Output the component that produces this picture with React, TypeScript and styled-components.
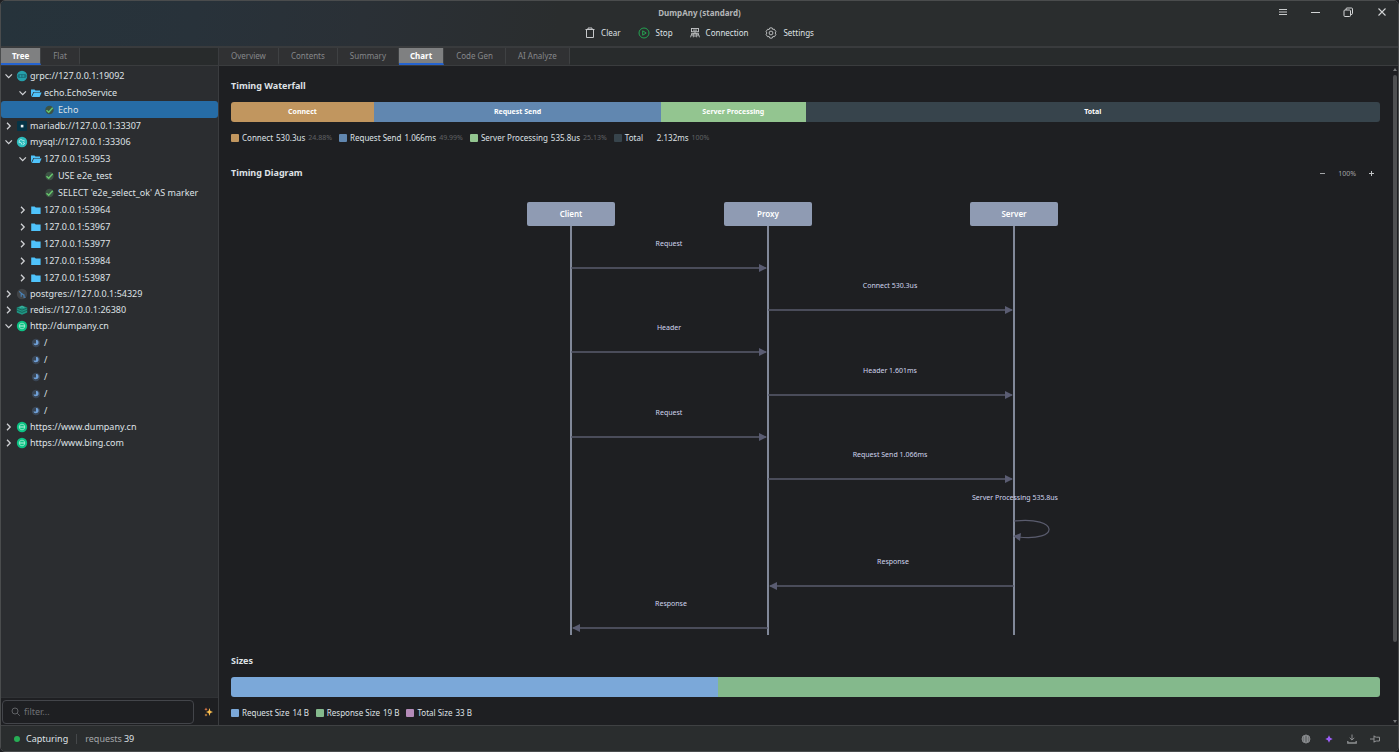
import React from "react";
import styled, { createGlobalStyle } from "styled-components";

const Global = createGlobalStyle`
  *, *::before, *::after { box-sizing: border-box; }
  html, body { margin: 0; background: #1e1f22; }
  body, button, input { font-family: "Noto Sans", "Open Sans", sans-serif; font-size: 9px; color: #dfe1e5; }
  button { border: 0; padding: 0; background: none; cursor: pointer; }
  h2 { margin: 0; }
`;

const Window = styled.div`
  display: flex;
  flex-direction: column;
  height: 100vh;
  border: 1px solid #4a4c4d;
  border-radius: 5px;
  overflow: hidden;
  background: #1e1f22;
`;

const Header = styled.header`
  display: grid;
  grid-template-columns: 1fr auto 1fr;
  grid-template-rows: 22px 20px;
  height: 47px;
  flex: none;
  border-bottom: 2px solid #393b3d;
  background: linear-gradient(100deg, #26333b 0%, #28323a 14%, #2a3036 26%, #2a2d2e 40%);
`;

const Title = styled.div`
  grid-column: 2;
  align-self: center;
  text-align: center;
  font-size: 8px;
  font-weight: 700;
  color: #b4b6b8;
`;

const WindowButtons = styled.div`
  grid-column: 3;
  justify-self: end;
  display: flex;
  align-items: center;
`;

const WindowButton = styled.button`
  display: grid;
  place-items: center;
  width: 33px;
  height: 22px;
`;

const Toolbar = styled.nav`
  grid-row: 2;
  grid-column: 2;
  display: flex;
  align-items: center;
  justify-content: center;
  gap: 17px;
`;

const ToolButton = styled.button`
  display: flex;
  align-items: center;
  gap: 6px;
  font-size: 8px;
  line-height: 16px;
`;

const Body = styled.div`
  display: flex;
  flex: 1;
  min-height: 0;
`;

const Sidebar = styled.aside`
  display: flex;
  flex-direction: column;
  width: 218px;
  flex: none;
  border-right: 1px solid #3a3c3f;
  background: #2b2d30;
`;

const TabBar = styled.div`
  display: flex;
  height: 18px;
  flex: none;
  border-bottom: 1px solid #3a3c3e;
  background: #282b2c;
`;

const Tab = styled.button<{ $active?: boolean }>`
  padding: 0 ${(p) => (p.$active ? 11 : 12)}px;
  font-size: 8px;
  line-height: 15px;
  font-weight: ${(p) => (p.$active ? 700 : 400)};
  color: ${(p) => (p.$active ? "#ffffff" : "#85878a")};
  background: ${(p) => (p.$active ? "#7f8081" : "#303133")};
  border-right: 1px solid #3f4143;
  border-bottom: 2px solid ${(p) => (p.$active ? "#2563cf" : "#303133")};
`;

const Tree = styled.ul`
  flex: 1;
  min-height: 0;
  margin: 0;
  padding: 2px 0 0;
  list-style: none;
  overflow: hidden;
`;

const TreeRow = styled.li<{ $level: number; $selected?: boolean }>`
  display: flex;
  align-items: center;
  gap: 2px;
  height: ${(p) => (p.$level ? 17 : 16)}px;
  padding-left: ${(p) => 3 + p.$level * 14}px;
  border-radius: 3px;
  line-height: 16px;
  white-space: nowrap;
  background: ${(p) => (p.$selected ? "#266ca6" : "transparent")};
`;

const Slot = styled.span<{ $w: number }>`
  display: grid;
  place-items: center;
  flex: none;
  width: ${(p) => p.$w}px;
`;

const FilterBar = styled.div`
  display: flex;
  align-items: center;
  height: 28px;
  flex: none;
  padding-left: 1px;
  border-top: 1px solid #303235;
  background: #1e1f22;
`;

const SearchField = styled.label`
  display: flex;
  align-items: center;
  gap: 4px;
  flex: 1;
  height: 24px;
  padding: 0 8px;
  border: 1px solid #43454a;
  border-radius: 4px;
`;

const SearchInput = styled.input`
  flex: 1;
  min-width: 0;
  padding: 0;
  border: 0;
  outline: 0;
  background: none;
  &::placeholder { color: #6f7175; opacity: 1; }
`;

const SparkButton = styled.button`
  display: grid;
  place-items: center;
  width: 20px;
  margin-left: 4px;
`;

const Main = styled.main`
  display: flex;
  flex-direction: column;
  flex: 1;
  min-width: 0;
`;

const ScrollArea = styled.div`
  display: flex;
  flex: 1;
  min-height: 0;
`;

const Content = styled.div`
  flex: 1;
  min-width: 0;
  padding: 13px 12px 0;
  overflow: hidden;
`;

const ScrollTrack = styled.div`
  display: flex;
  flex-direction: column;
  align-items: center;
  gap: 4px;
  width: 6px;
  padding: 2px 0;
`;

const ScrollThumb = styled.div`
  width: 4px;
  height: 567px;
  margin-bottom: auto;
  border-radius: 2px;
  background: #505153;
`;

const SectionHead = styled.div`
  display: flex;
  align-items: center;
  justify-content: space-between;
  height: 14px;
`;

const SectionTitle = styled.h2`
  font-size: 9px;
  line-height: 14px;
  font-weight: 700;
`;

const Bar = styled.div`
  display: flex;
  height: 20px;
  margin-top: 9px;
  border-radius: 3px;
  overflow: hidden;
`;

const Segment = styled.div<{ $grow: number; $color: string }>`
  flex: ${(p) => p.$grow} 1 0;
  background: ${(p) => p.$color};
  color: #ffffff;
  font-size: 7px;
  line-height: 20px;
  font-weight: 700;
  text-align: center;
`;

const Legend = styled.div`
  display: flex;
  gap: 7px;
  margin-top: 8px;
  font-size: 8px;
  line-height: 16px;
`;

const LegendItem = styled.span`
  display: flex;
  align-items: center;
  gap: 3px;
`;

const LegendName = styled.span`
  min-width: 29px;
`;

const Swatch = styled.i<{ $color: string }>`
  width: 8px;
  height: 8px;
  border-radius: 1px;
  background: ${(p) => p.$color};
`;

const Percent = styled.span`
  color: #606265;
  font-size: 7px;
`;

const Zoom = styled.div`
  display: flex;
  align-items: center;
  gap: 12px;
  padding-right: 5px;
  font-size: 7px;
  color: #a2a4a7;
`;

const ZoomButton = styled.button`
  display: grid;
  place-items: center;
  width: 7px;
  height: 14px;
`;

const DiagramSection = styled.section`
  margin-top: 20px;
`;

const Diagram = styled.svg`
  display: block;
  margin: 21px auto 0;
  font-size: 7px;
`;

const SizesSection = styled.section`
  margin-top: 18px;
`;

const StatusBar = styled.footer`
  display: flex;
  align-items: center;
  height: 26px;
  flex: none;
  padding: 0 17px 0 13px;
  border-top: 1px solid #3f4143;
  background: #2a2d2e;
`;

const Dot = styled.i`
  width: 6px;
  height: 6px;
  margin-right: 6px;
  border-radius: 50%;
  background: #27ae55;
`;

const Divider = styled.i`
  width: 1px;
  height: 10px;
  margin: 0 8px;
  background: #45484a;
`;

const Muted = styled.span`
  color: #a5a7a9;
  margin-right: 2px;
`;

const StatusIcons = styled.div`
  display: flex;
  gap: 11px;
  margin-left: auto;
`;

const IconButton = styled.button`
  display: grid;
  place-items: center;
  width: 12px;
  height: 14px;
`;

const Chevron = ({ open }: { open?: boolean }) => (
  <svg width="10" height="10" viewBox="0 0 10 10" fill="none" stroke="#cfd1d4" strokeWidth="1.3">
    <path d={open ? "M1.5 3.4 4.700 6.600 7.900 3.4" : "M3 1.8 6.2 5 3 8.2"} />
  </svg>
);

type IconName = "grpc" | "open" | "folder" | "check" | "maria" | "mysql" | "pg" | "redis" | "http" | "pending";

const TreeIcon = ({ name }: { name: IconName }) => (
  <svg width="12" height="12" viewBox="0 0 12 12" fill="none">
    {name === "grpc" && (
      <>
        <circle cx="6" cy="6" r="5.2" fill="#25a0ab" />
        <rect x="1.8" y="4.6" width="8.4" height="2.8" rx="1.2" fill="#1d7f8a" stroke="#17606b" strokeWidth=".6" />
        <path d="M4.6 4.8v2.4M7.2 4.8v2.4" stroke="#2fb0b8" strokeWidth=".7" />
      </>
    )}
    {name === "open" && (
      <>
        <path d="M1 10V2.5h3.5l1 1H10V5H3.4L1 10Z" fill="#4fc3fb" />
        <path d="M3.9 5.6H11.6L9.6 10H1.9Z" fill="#4fc3fb" />
      </>
    )}
    {name === "folder" && <path d="M1.200 2.4h3.4l1.2 1.2H10.600V10H1.200Z" fill="#4fc3fb" />}
    {name === "check" && (
      <>
        <circle cx="5.500" cy="6" r="4.2" fill="#3c5344" />
        <path d="M2.500 6.2 4.700 8.2 8.700 3.800" stroke="#67c66d" strokeWidth="1.5" />
      </>
    )}
    {name === "maria" && (
      <>
        <rect x="1" y="1" width="10" height="10" rx="1" fill="#053446" />
        <rect x="4.8" y="4.8" width="2.6" height="2.6" fill="#f0f4f5" />
      </>
    )}
    {name === "mysql" && (
      <>
        <circle cx="6" cy="6" r="5.2" fill="#2cbdbd" />
        <path d="M3.200 6.800V4.600L4.800 3.400 6.600 4.400 8.800 5M3.200 6.200 5.200 6.800 6 8.800M6.800 6.400 8.800 7.400 6.800 8.800" stroke="#b5eeee" strokeWidth=".9" />
      </>
    )}
    {name === "pg" && (
      <>
        <circle cx="6" cy="6" r="5.2" fill="#414447" />
        <path d="M3.2 3.4 5.2 5.2 8 7.2M5.2 5.2v3.6M8 6.4v2.8h1.6" stroke="#4a83b8" strokeWidth="1.1" />
      </>
    )}
    {name === "redis" && (
      <>
        <path d="M.8 3.6 6 1.4l5.2 2.2v5L6 10.8.8 8.600Z" fill="#1f9583" />
        <path d="M.8 3.9 6 6.100 11.200 3.900M.8 6.200 6 8.400 11.200 6.200" stroke="#155a52" strokeWidth=".8" />
        <path d="M3.600 3.600 6 2.600 8.400 3.600" stroke="#57cdb8" strokeWidth=".7" />
      </>
    )}
    {name === "http" && (
      <>
        <circle cx="6" cy="6" r="5.2" fill="#0cc284" />
        <circle cx="6" cy="6" r="2.800" stroke="#9beccb" strokeWidth=".8" />
        <path d="M3.200 6h5.600" stroke="#d6f8ea" strokeWidth=".9" />
      </>
    )}
    {name === "pending" && (
      <>
        <circle cx="6" cy="6" r="4.200" fill="#3a4655" />
        <path d="M6 3h1.200Q8.800 4 8.600 6.200 8 8.200 5.800 8.300 4.200 8.200 3.600 7V6.400H6Z" fill="#6f9fd6" />
      </>
    )}
  </svg>
);

type Row = { level: number; icon: IconName; text: string; open?: boolean; leaf?: boolean; selected?: boolean };

const rows: Row[] = [
  { level: 0, icon: "grpc", text: "grpc://127.0.0.1:19092", open: true },
  { level: 1, icon: "open", text: "echo.EchoService", open: true },
  { level: 2, icon: "check", text: "Echo", leaf: true, selected: true },
  { level: 0, icon: "maria", text: "mariadb://127.0.0.1:33307" },
  { level: 0, icon: "mysql", text: "mysql://127.0.0.1:33306", open: true },
  { level: 1, icon: "open", text: "127.0.0.1:53953", open: true },
  { level: 2, icon: "check", text: "USE e2e_test", leaf: true },
  { level: 2, icon: "check", text: "SELECT 'e2e_select_ok' AS marker", leaf: true },
  ...["53964", "53967", "53977", "53984", "53987"].map(
    (port): Row => ({ level: 1, icon: "folder", text: `127.0.0.1:${port}` })
  ),
  { level: 0, icon: "pg", text: "postgres://127.0.0.1:54329" },
  { level: 0, icon: "redis", text: "redis://127.0.0.1:26380" },
  { level: 0, icon: "http", text: "http://dumpany.cn", open: true },
  ...Array.from({ length: 5 }, (): Row => ({ level: 1, icon: "pending", text: "/", leaf: true })),
  { level: 0, icon: "http", text: "https://www.dumpany.cn" },
  { level: 0, icon: "http", text: "https://www.bing.com" },
];

const timings = [
  { name: "Connect", value: "530.3us", pct: "24.88%", grow: 2488, color: "#c1965f" },
  { name: "Request Send", value: "1.066ms", pct: "49.99%", grow: 4999, color: "#6187b0" },
  { name: "Server Processing", value: "535.8us", pct: "25.13%", grow: 2513, color: "#93c590" },
  { name: "Total", value: "2.132ms", pct: "100%", grow: 10000, color: "#37444c" },
];

const sizes = [
  { name: "Request Size", value: "14 B", color: "#7ba8d9" },
  { name: "Response Size", value: "19 B", color: "#84b98c" },
  { name: "Total Size", value: "33 B", color: "#b48bb8" },
];

const actors = [
  { name: "Client", x: 45 },
  { name: "Proxy", x: 242 },
  { name: "Server", x: 488 },
];

const messages = [
  { text: "Request", from: 45, to: 242, y: 67, tx: 143 },
  { text: "Connect 530.3us", from: 242, to: 488, y: 109, tx: 364 },
  { text: "Header", from: 45, to: 242, y: 151, tx: 143 },
  { text: "Header 1.601ms", from: 242, to: 488, y: 194, tx: 364 },
  { text: "Request", from: 45, to: 242, y: 236, tx: 143 },
  { text: "Request Send 1.066ms", from: 242, to: 488, y: 278, tx: 364 },
  { text: "Response", from: 488, to: 242, y: 385, tx: 367 },
  { text: "Response", from: 242, to: 45, y: 427, tx: 145 },
];

const SequenceDiagram = () => (
  <Diagram width="560" height="435" viewBox="0 0 560 435" role="img" aria-label="Timing Diagram">
    {actors.map((a) => (
      <g key={a.name}>
        <path d={`M${a.x} 25V434`} stroke="#a3adc2" strokeWidth="1.5" />
        <rect x={a.x - 44} y="1" width="88" height="24" rx="2" fill="#8f9bb3" />
        <text x={a.x} y="16" textAnchor="middle" fill="#ffffff" fontSize="8" fontWeight="600">{a.name}</text>
      </g>
    ))}
    {messages.map((m, i) => {
      const dir = m.to > m.from ? 1 : -1;
      return (
        <g key={i}>
          <path d={`M${m.from} ${m.y}H${m.to - dir * 2}`} stroke="#5a5c6e" strokeWidth="1.300" />
          <path d={`M${m.to - dir} ${m.y}l${-dir * 8} -4v8Z`} fill="#5a5c72" />
          <text x={m.tx} y={m.y - 22} textAnchor="middle" fill="#d0d5ee">{m.text}</text>
        </g>
      );
    })}
    <path d="M488 320C534 315 534 341 492 336" fill="none" stroke="#5a5c6e" strokeWidth="1.200" />
    <path d="M487 335 495 332 494 340Z" fill="#5a5c72" />
    <text x="489" y="299" textAnchor="middle" fill="#d0d5ee">Server Processing 535.8us</text>
  </Diagram>
);

export default function App() {
  return (
    <>
      <Global />
      <Window>
        <Header>
          <Title>DumpAny (standard)</Title>
          <WindowButtons>
            <WindowButton aria-label="Menu">
              <svg width="10" height="10" fill="none" stroke="#c9cbcc"><path d="M1 2.500H9M1 5H9M1 7.500H9" /></svg>
            </WindowButton>
            <WindowButton aria-label="Minimize">
              <svg width="10" height="10" fill="none" stroke="#d2d4d5"><path d="M0 5.500H9" /></svg>
            </WindowButton>
            <WindowButton aria-label="Restore">
              <svg width="11" height="11" fill="none" stroke="#d2d4d5">
                <rect x="1" y="3" width="6.500" height="6.500" rx="1" />
                <path d="M3 3V2Q3 1 4 1H8.500Q9.500 1 9.500 2V6.500Q9.500 7.500 8 7.500" />
              </svg>
            </WindowButton>
            <WindowButton aria-label="Close">
              <svg width="10" height="10" fill="none" stroke="#d2d4d5" strokeWidth="1.100"><path d="M1.500 1.500 8.500 8.500M8.500 1.500 1.500 8.500" /></svg>
            </WindowButton>
          </WindowButtons>
          <Toolbar>
            <ToolButton>
              <svg width="10" height="12" viewBox="0 0 10 12" fill="none" stroke="#c6c8ca">
                <path d="M.5 2.500H9.500M3 2.500V1H7V2.500M1.500 2.500V10.500H8.500V2.500" />
              </svg>
              Clear
            </ToolButton>
            <ToolButton>
              <svg width="12" height="12" viewBox="0 0 12 12" fill="none" stroke="#25a352">
                <circle cx="6" cy="6" r="5" />
                <path d="M4.700 3.800 8.200 6 4.700 8.200Z" />
              </svg>
              Stop
            </ToolButton>
            <ToolButton>
              <svg width="10" height="12" viewBox="0 0 10 12" fill="none" stroke="#c6c8ca" strokeWidth=".9">
                <rect x="1.500" y="1.500" width="7" height="3.200" />
                <path d="M3 3.100H7M5 4.700V10M1.600 8V6.300H8.400V8M.6 10.300 1.200 8H3.300V10.300M6.700 10.300V8H8.800L9.400 10.300M3.300 6.300V8M6.700 6.300V8" />
              </svg>
              Connection
            </ToolButton>
            <ToolButton>
              <svg width="12" height="12" viewBox="0 0 12 12" fill="none" stroke="#c6c8ca" strokeWidth=".9">
                <path d="M4.800.9H7.200L7.700 2.400 9.300 2.200 10.900 4.600 10.200 6 10.900 7.400 9.500 9.700 7.800 9.500 7.200 11.100H4.800L4.200 9.500 2.500 9.700 1.100 7.400 1.900 6 1.100 4.600 2.500 2.300 4.200 2.500Z" />
                <circle cx="6" cy="6" r="1.900" />
              </svg>
              Settings
            </ToolButton>
          </Toolbar>
        </Header>
        <Body>
          <Sidebar>
            <TabBar>
              <Tab $active>Tree</Tab>
              <Tab>Flat</Tab>
            </TabBar>
            <Tree>
              {rows.map((r, i) => (
                <TreeRow key={i} $level={r.level} $selected={r.selected}>
                  <Slot $w={10}>{!r.leaf && <Chevron open={r.open} />}</Slot>
                  <Slot $w={12}><TreeIcon name={r.icon} /></Slot>
                  {r.text}
                </TreeRow>
              ))}
            </Tree>
            <FilterBar>
              <SearchField>
                <svg width="9" height="10" viewBox="0 0 9 10" fill="none" stroke="#5f6165"><circle cx="4" cy="4" r="3" /><path d="M6.200 6.200 8.800 8.800" /></svg>
                <SearchInput placeholder="filter..." aria-label="filter" />
              </SearchField>
              <SparkButton aria-label="AI filter">
                <svg width="9" height="10" viewBox="0 0 9 10">
                  <path d="M5.500 1 6.400 4 9 5 6.400 6 5.500 9 4.500 6 2 5 4.500 4Z" fill="#ffc14f" />
                  <path d="M2 .5 2.500 1.700 3.700 2.200 2.500 2.700 2 4 1.500 2.700.3 2.200 1.500 1.700Z" fill="#ee7f4b" />
                  <path d="M2 6.500 2.400 7.600 3.500 8 2.400 8.400 2 9.500 1.600 8.400.5 8 1.600 7.600Z" fill="#f3a04c" />
                </svg>
              </SparkButton>
            </FilterBar>
          </Sidebar>
          <Main>
            <TabBar>
              {["Overview", "Contents", "Summary", "Chart", "Code Gen", "AI Analyze"].map((t) => (
                <Tab key={t} $active={t === "Chart"}>{t}</Tab>
              ))}
            </TabBar>
            <ScrollArea>
              <Content>
                <section>
                  <SectionHead><SectionTitle>Timing Waterfall</SectionTitle></SectionHead>
                  <Bar>
                    {timings.map((t) => (
                      <Segment key={t.name} $grow={t.grow} $color={t.color}>{t.name}</Segment>
                    ))}
                  </Bar>
                  <Legend>
                    {timings.map((t) => (
                      <LegendItem key={t.name}>
                        <Swatch $color={t.color} />
                        <LegendName>{t.name}</LegendName>
                        <span>{t.value}</span>
                        <Percent>{t.pct}</Percent>
                      </LegendItem>
                    ))}
                  </Legend>
                </section>
                <DiagramSection>
                  <SectionHead>
                    <SectionTitle>Timing Diagram</SectionTitle>
                    <Zoom>
                      <ZoomButton aria-label="Zoom out"><svg width="7" height="7" stroke="#a2a4a7"><path d="M1 3.500H6" /></svg></ZoomButton>
                      100%
                      <ZoomButton aria-label="Zoom in"><svg width="7" height="7" stroke="#c0c2c4"><path d="M1 3.500H6M3.500 1V6" /></svg></ZoomButton>
                    </Zoom>
                  </SectionHead>
                  <SequenceDiagram />
                </DiagramSection>
                <SizesSection>
                  <SectionHead><SectionTitle>Sizes</SectionTitle></SectionHead>
                  <Bar>
                    <Segment $grow={14} $color="#7ba8d9" />
                    <Segment $grow={19} $color="#84b98c" />
                  </Bar>
                  <Legend>
                    {sizes.map((s) => (
                      <LegendItem key={s.name}>
                        <Swatch $color={s.color} />
                        <LegendName>{s.name}</LegendName>
                        <span>{s.value}</span>
                      </LegendItem>
                    ))}
                  </Legend>
                </SizesSection>
              </Content>
              <ScrollTrack>
                <svg width="4" height="3"><path d="M0 3 2 0 4 3Z" fill="#77797b" /></svg>
                <ScrollThumb />
                <svg width="4" height="3"><path d="M0 0H4L2 3Z" fill="#77797b" /></svg>
              </ScrollTrack>
            </ScrollArea>
          </Main>
        </Body>
        <StatusBar>
          <Dot />
          Capturing
          <Divider />
          <Muted>requests</Muted>39
          <StatusIcons>
            <IconButton aria-label="Network">
              <svg width="10" height="10" viewBox="0 0 10 10" fill="#55585a" stroke="#9b9da0" strokeWidth=".7">
                <circle cx="5" cy="5" r="4" /><ellipse cx="5" cy="5" rx="1.800" ry="4" /><path d="M1 5H9M1.600 3H8.400M1.600 7H8.400" />
              </svg>
            </IconButton>
            <IconButton aria-label="Assistant">
              <svg width="8" height="8" viewBox="0 0 8 8"><path d="M4 .3 5.200 2.800 7.700 4 5.200 5.200 4 7.700 2.800 5.200.3 4 2.800 2.800Z" fill="#9a5cf5" /></svg>
            </IconButton>
            <IconButton aria-label="Download">
              <svg width="10" height="10" viewBox="0 0 10 10" fill="none" stroke="#8f9193">
                <path d="M5 .5V6M2.700 3.800 5 6.100 7.300 3.800" /><path d="M.8 7V9H9.200V7" strokeWidth="1.300" />
              </svg>
            </IconButton>
            <IconButton aria-label="Pin">
              <svg width="11" height="10" viewBox="0 0 11 10" fill="none" stroke="#8f9193">
                <path d="M0 5H4M4 1.500V8.500M4 2.500 6.500 3.200H9.500V7H6.500L4 7.700" />
              </svg>
            </IconButton>
          </StatusIcons>
        </StatusBar>
      </Window>
    </>
  );
}
